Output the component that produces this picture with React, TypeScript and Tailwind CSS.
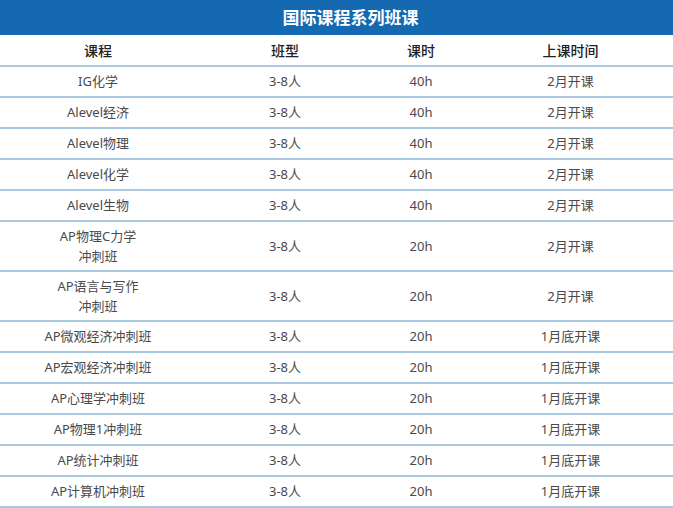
import React from "react";

const rows: [React.ReactNode, string, string, string, boolean?][] = [
  ["IG化学", "3-8人", "40h", "2月开课"],
  ["Alevel经济", "3-8人", "40h", "2月开课"],
  ["Alevel物理", "3-8人", "40h", "2月开课"],
  ["Alevel化学", "3-8人", "40h", "2月开课"],
  ["Alevel生物", "3-8人", "40h", "2月开课"],
  [<>AP物理C力学<br />冲刺班</>, "3-8人", "20h", "2月开课", true],
  [<>AP语言与写作<br />冲刺班</>, "3-8人", "20h", "2月开课", true],
  ["AP微观经济冲刺班", "3-8人", "20h", "1月底开课"],
  ["AP宏观经济冲刺班", "3-8人", "20h", "1月底开课"],
  ["AP心理学冲刺班", "3-8人", "20h", "1月底开课"],
  ["AP物理1冲刺班", "3-8人", "20h", "1月底开课"],
  ["AP统计冲刺班", "3-8人", "20h", "1月底开课"],
  ["AP计算机冲刺班", "3-8人", "20h", "1月底开课"],
];

export default function App() {
  return (
    <div
      className="w-[673px] h-[508px] bg-white overflow-hidden"
      style={{ fontFamily: '"Noto Sans", "Noto Sans CJK SC", sans-serif' }}
    >
      <div className="h-[35px] bg-[#1469b0] flex items-center justify-center pl-[28px] text-white font-bold text-[17px] leading-none">
        国际课程系列班课
      </div>
      <div className="grid grid-cols-[196px_178px_94px_1fr] h-[32px] border-b-2 border-[#a8c8e2] text-[14px] font-medium text-[#222] items-center text-center">
        <div>课程</div>
        <div>班型</div>
        <div>课时</div>
        <div>上课时间</div>
      </div>
      {rows.map((r, i) => (
        <div
          key={i}
          className={`grid grid-cols-[196px_178px_94px_1fr] border-b-2 border-[#a8c8e2] text-[13px] text-[#4a4a4a] items-center text-center ${r[4] ? "h-[50px] leading-[20px]" : "h-[31px]"}`}
        >
          <div>{r[0]}</div>
          <div>{r[1]}</div>
          <div>{r[2]}</div>
          <div>{r[3]}</div>
        </div>
      ))}
    </div>
  );
}
